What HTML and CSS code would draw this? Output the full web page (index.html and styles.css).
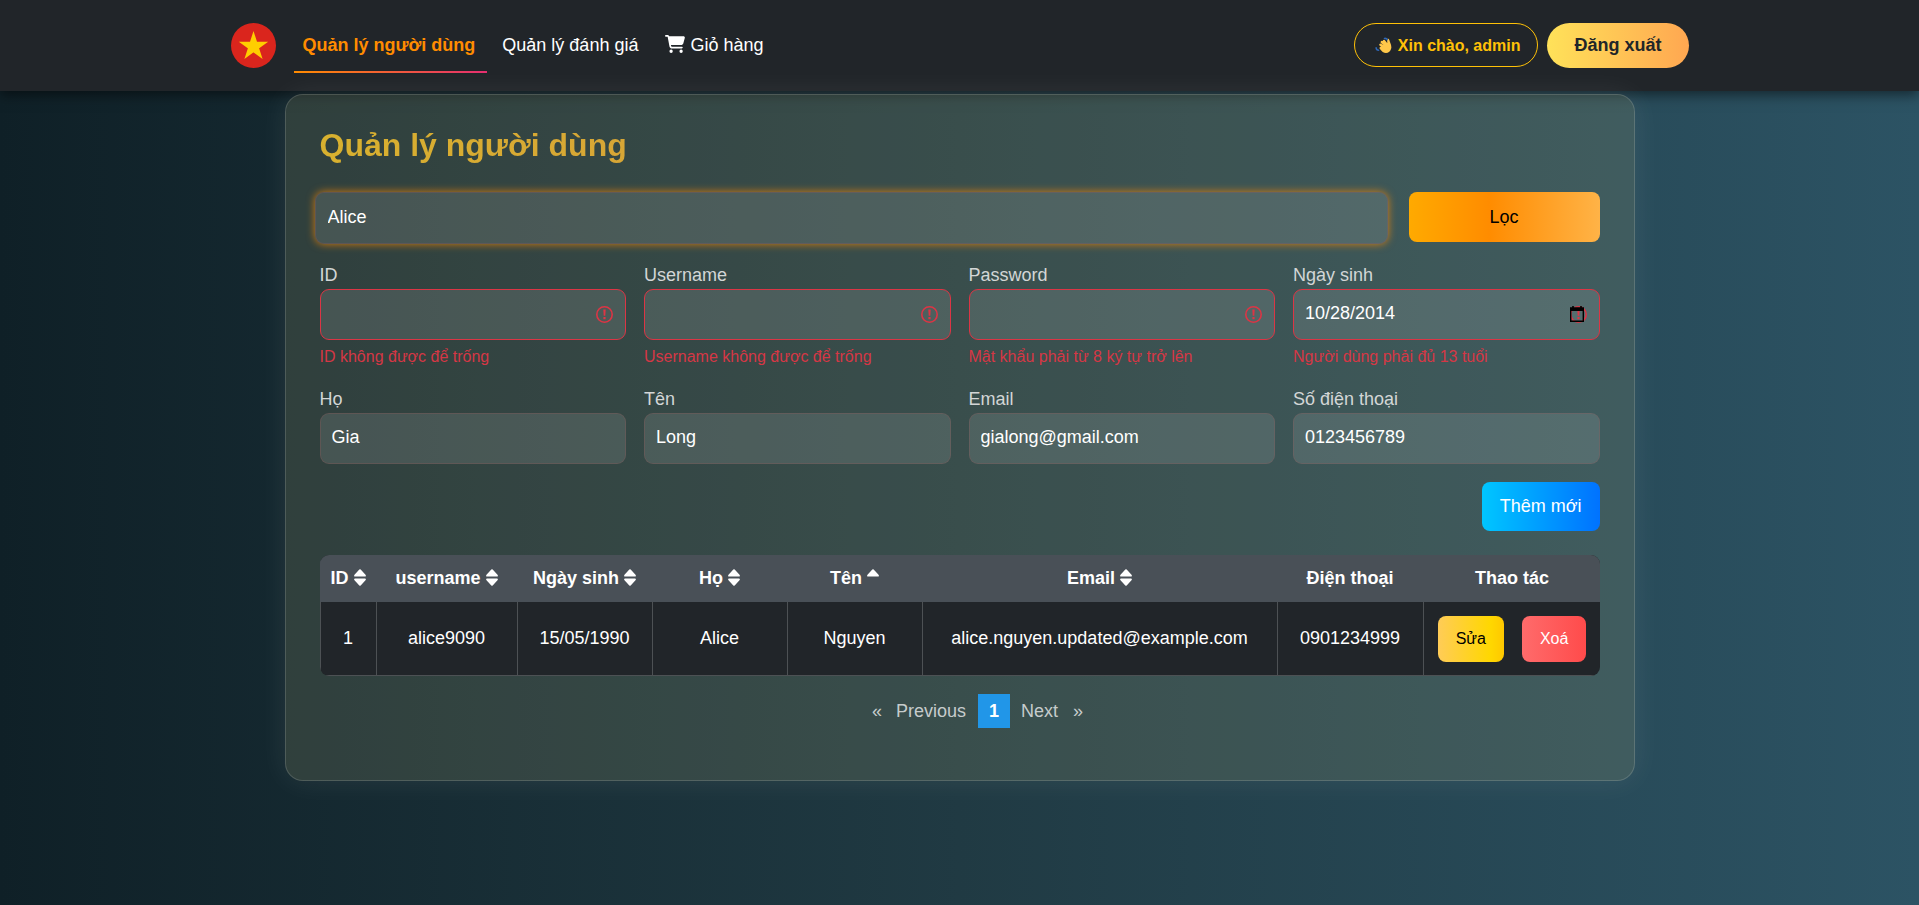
FILE: index.html
```
<!DOCTYPE html>
<html lang="vi">
<head>
<meta charset="utf-8">
<title>Quản lý người dùng</title>
<link rel="stylesheet" href="styles.css">
</head>
<body>
<svg class="sprite" aria-hidden="true">
  <symbol id="sort" viewBox="0 0 12 17"><path d="M5.300.6L.5 5.700C-.3 6.800.2 7.600 1.400 7.600H10.600C11.800 7.600 12.300 6.800 11.500 5.700L6.700.6Q6 0 5.300.6ZM5.300 16.400L.5 11.300C-.3 10.200.2 9.400 1.400 9.400H10.600C11.800 9.400 12.300 10.200 11.500 11.300L6.700 16.400Q6 17 5.300 16.400Z"/></symbol>
  <symbol id="sort-up" viewBox="0 0 12 17"><path d="M5.300.6L.5 5.700C-.3 6.800.2 7.600 1.400 7.600H10.600C11.800 7.600 12.300 6.800 11.500 5.700L6.700.6Q6 0 5.300.6Z"/></symbol>
  <symbol id="alert" viewBox="0 0 17 17"><circle cx="8.500" cy="8.500" r="7.700" fill="none" stroke="#dc3545" stroke-width="1.600"/><path fill="#dc3545" d="M7.300 3.600h2.400l-.4 6.200H7.700zM7.400 11h2.200v2.200H7.400z"/></symbol>
</svg>
<header class="navbar">
  <div class="navbar-inner">
    <a class="logo" href="#" aria-label="Trang chủ">
      <svg viewBox="0 0 45 45"><circle cx="22.500" cy="22.500" r="22.500" fill="#da251d"/><path fill="#ffcd00" d="M22.500 8L31.600 36L7.800 18.700H37.200L13.400 36z"/></svg>
    </a>
    <nav class="nav">
      <a class="nav-link active" href="#">Quản lý người dùng</a>
      <a class="nav-link" href="#">Quản lý đánh giá</a>
      <a class="nav-link" href="#"><svg class="cart" viewBox="0 0 576 512"><path fill="currentColor" d="M0 24C0 10.700 10.700 0 24 0H69.500c22 0 41.500 12.800 50.600 32h411c26.300 0 45.500 25 38.600 50.400l-41 152.300c-8.500 31.400-37 53.300-69.500 53.300H170.700l5.400 28.500c2.200 11.300 12.100 19.500 23.600 19.500H488c13.300 0 24 10.700 24 24s-10.700 24-24 24H199.700c-34.600 0-64.300-24.600-70.700-58.500L77.400 54.500c-.7-3.800-4-6.500-7.900-6.500H24C10.700 48 0 37.300 0 24zM128 464a48 48 0 1 1 96 0 48 48 0 1 1-96 0zm336-48a48 48 0 1 1 0 96 48 48 0 1 1 0-96z"/></svg> Giỏ hàng</a>
    </nav>
    <div class="account">
      <span class="greeting">
        <svg class="wave" viewBox="0 0 18 18"><g transform="rotate(-8 10 11)"><path fill="none" stroke="#ffc84a" stroke-width="2.600" stroke-linecap="round" d="M6.200 7.600L10 11M8 5L11.500 9M10.500 4.200L13 8.500M6 11L9 13"/><path fill="#ffc84a" d="M7 10L12.500 6.500C14 8 13.800 5.500 13.700 3.500C14 2 16 2.200 16.200 4C16.500 7 18 10 17 13C15.500 17.500 10.500 18.500 7.500 15.500L5.300 12.500Z"/></g><path fill="none" stroke="#2f66b5" stroke-width="1.600" stroke-linecap="round" d="M10 1.500Q12.400 1.200 13 3M1.200 11.500Q1.400 13.800 3.800 14"/></svg>
        Xin chào, admin
      </span>
      <button class="logout" type="button">Đăng xuất</button>
    </div>
  </div>
</header>
<main class="card">
  <h1 class="title">Quản lý người dùng</h1>
  <form class="search">
    <input class="control search-input" type="text" value="Alice" aria-label="Tìm kiếm">
    <button class="btn btn-filter" type="button">Lọc</button>
  </form>
  <form class="user-form">
    <div class="field">
      <label for="f-id">ID</label>
      <div class="box invalid"><input class="control" id="f-id" type="text"><svg class="alert"><use href="#alert"/></svg></div>
      <p class="error">ID không được để trống</p>
    </div>
    <div class="field">
      <label for="f-user">Username</label>
      <div class="box invalid"><input class="control" id="f-user" type="text"><svg class="alert"><use href="#alert"/></svg></div>
      <p class="error">Username không được để trống</p>
    </div>
    <div class="field">
      <label for="f-pass">Password</label>
      <div class="box invalid"><input class="control" id="f-pass" type="password"><svg class="alert"><use href="#alert"/></svg></div>
      <p class="error">Mật khẩu phải từ 8 ký tự trở lên</p>
    </div>
    <div class="field">
      <label for="f-dob">Ngày sinh</label>
      <div class="box invalid"><input class="control" id="f-dob" type="text" value="10/28/2014"><svg class="alert"><use href="#alert"/></svg><svg class="calendar" viewBox="0 0 14 16"><path fill="none" stroke="#000" stroke-width="1.400" d="M.7 2.300h12.600v13H.7z"/><path d="M0 1.600h14V5H0zM2.200 0h1.600v2H2.200zM10.200 0h1.600v2h-1.600z"/></svg></div>
      <p class="error">Người dùng phải đủ 13 tuổi</p>
    </div>
    <div class="field">
      <label for="f-last">Họ</label>
      <div class="box"><input class="control" id="f-last" type="text" value="Gia"></div>
    </div>
    <div class="field">
      <label for="f-first">Tên</label>
      <div class="box"><input class="control" id="f-first" type="text" value="Long"></div>
    </div>
    <div class="field">
      <label for="f-email">Email</label>
      <div class="box"><input class="control" id="f-email" type="text" value="gialong@gmail.com"></div>
    </div>
    <div class="field">
      <label for="f-phone">Số điện thoại</label>
      <div class="box"><input class="control" id="f-phone" type="text" value="0123456789"></div>
    </div>
    <button class="btn btn-add" type="button">Thêm mới</button>
  </form>
  <div class="table-wrap">
    <table class="users">
      <colgroup><col class="c-id"><col class="c-user"><col class="c-name"><col class="c-name"><col class="c-name"><col class="c-email"><col class="c-phone"><col class="c-act"></colgroup>
      <thead>
        <tr>
          <th>ID <svg class="sort"><use href="#sort"/></svg></th>
          <th>username <svg class="sort"><use href="#sort"/></svg></th>
          <th>Ngày sinh <svg class="sort"><use href="#sort"/></svg></th>
          <th>Họ <svg class="sort"><use href="#sort"/></svg></th>
          <th>Tên <svg class="sort"><use href="#sort-up"/></svg></th>
          <th>Email <svg class="sort"><use href="#sort"/></svg></th>
          <th>Điện thoại</th>
          <th>Thao tác</th>
        </tr>
      </thead>
      <tbody>
        <tr>
          <td>1</td>
          <td>alice9090</td>
          <td>15/05/1990</td>
          <td>Alice</td>
          <td>Nguyen</td>
          <td>alice.nguyen.updated@example.com</td>
          <td>0901234999</td>
          <td><div class="actions"><button class="btn btn-sm btn-edit" type="button">Sửa</button><button class="btn btn-sm btn-delete" type="button">Xoá</button></div></td>
        </tr>
      </tbody>
    </table>
  </div>
  <nav class="pagination" aria-label="Phân trang">
    <a class="page" href="#">«</a><a class="page" href="#">Previous</a><a class="page current" href="#">1</a><a class="page" href="#">Next</a><a class="page" href="#">»</a>
  </nav>
</main>
</body>
</html>
```
FILE: styles.css
```
* {
  box-sizing: border-box;
}

body {
  margin: 0;
  min-height: 100vh;
  font-family: "Liberation Sans", Arial, sans-serif;
  font-size: 18px;
  line-height: 27px;
  color: #fff;
  background: linear-gradient(to right, #0f2027, #203a43, #2c5364);
}

a {
  color: inherit;
  text-decoration: none;
}

button,
input {
  font: inherit;
  color: inherit;
}

.sprite {
  display: none;
}

.navbar {
  padding: 9px 24px;
  background: #212529;
  box-shadow: 0 4px 12px rgba(0, 0, 0, 0.5);
}

.navbar-inner {
  display: flex;
  align-items: center;
  max-width: 1458px;
  height: 73px;
  margin: 0 auto;
}

.logo {
  width: 45px;
  height: 45px;
  margin-right: 18px;
}

.logo svg {
  display: block;
}

.nav {
  display: flex;
  gap: 6px;
}

.nav-link {
  padding: 14px 12px 12px 9px;
  border-bottom: 2px solid transparent;
}

.nav-link.active {
  font-weight: bold;
  color: #ff8c00;
  border-image: linear-gradient(to right, #ff8c00, #e52e71) 1;
}

.cart {
  width: 20px;
  height: 18px;
  vertical-align: -2px;
}

.account {
  display: flex;
  align-items: flex-start;
  gap: 9px;
  margin-left: auto;
}

.greeting {
  display: flex;
  align-items: center;
  gap: 6px;
  height: 44px;
  padding: 0 17px 0 20px;
  border: 1px solid #ffc107;
  border-radius: 22px;
  font-size: 16px;
  font-weight: bold;
  color: #ffc107;
}

.wave {
  width: 17px;
  height: 17px;
}

.logout {
  height: 45px;
  padding: 0 27px;
  border: 0;
  border-radius: 23px;
  font-weight: bold;
  color: #212529;
  background: linear-gradient(to right, #ffe259, #ffa751);
}

.card {
  max-width: 1350px;
  margin: 3px auto 0;
  padding: 31px 34px 52px;
  border: 1px solid rgba(255, 255, 255, 0.15);
  border-radius: 18px;
  background: rgba(160, 160, 115, 0.2);
  box-shadow: 0 0 30px rgba(255, 255, 255, 0.08);
}

.title {
  margin: 0 0 27px;
  font-size: 32px;
  line-height: 39px;
  color: transparent;
  background: linear-gradient(to right, #d8b12f, #d6953f 60%, #d6953f);
  background-clip: text;
  -webkit-background-clip: text;
}

.search {
  display: grid;
  grid-template-columns: 1fr 191px;
  gap: 21px;
  align-items: start;
  margin: 0 0 18px -5px;
}

.control {
  display: block;
  width: 100%;
  height: 51px;
  padding: 0 11px 2px;
  border: 1px solid rgba(150, 90, 90, 0.3);
  border-radius: 9px;
  background: rgba(255, 255, 255, 0.11);
  outline: 0;
}

.search-input {
  height: 52px;
  padding-left: 12px;
  box-shadow: 0 0 9px rgba(255, 140, 0, 0.8);
}

.btn {
  height: 49px;
  padding: 0 18px;
  border: 0;
  border-radius: 8px;
}

.btn-filter {
  height: 50px;
  color: #000;
  background: linear-gradient(to right, #ffaa00, #ff8c00 42%, #ffb347);
}

.user-form {
  display: grid;
  grid-template-columns: repeat(4, 1fr);
  column-gap: 18px;
  row-gap: 18px;
}

.field label {
  display: block;
  color: #d3d6d6;
}

.box {
  position: relative;
}

.invalid .control {
  border-color: #dc3545;
}

.alert {
  position: absolute;
  top: 17px;
  right: 13px;
  width: 17px;
  height: 17px;
}

.calendar {
  position: absolute;
  top: 17px;
  right: 16px;
  width: 14px;
  height: 16px;
}

.error {
  margin: 5px 0 0;
  font-size: 16px;
  line-height: 23px;
  color: #d53745;
}

.btn-add {
  grid-column: 4;
  justify-self: end;
  background: linear-gradient(to right, #00c6ff, #0072ff);
}

.table-wrap {
  margin-top: 24px;
  overflow: hidden;
  border-radius: 9px;
}

.users {
  width: 100%;
  border-collapse: collapse;
  table-layout: fixed;
  text-align: center;
  background: #212529;
}

.users th {
  height: 46px;
  padding: 0;
  border: 1px solid #495057;
  background: #495057;
}

.users td {
  height: 74px;
  padding: 0;
  border: 1px solid #4d5154;
}

.c-id { width: 56px; }
.c-user { width: 141px; }
.c-name { width: 135px; }
.c-email { width: 355px; }
.c-phone { width: 146px; }
.c-act { width: 178px; }

.sort {
  width: 12px;
  height: 17px;
  vertical-align: -2px;
  fill: #fff;
}

.actions {
  display: flex;
  justify-content: center;
  gap: 18px;
}

.btn-sm {
  height: 46px;
  font-size: 16px;
}

.btn-edit {
  color: #000;
  background: linear-gradient(to right, #ffcc57, #ffd700 80%, #ffc800);
}

.btn-delete {
  background: linear-gradient(to right, #ff6b6b, #ff4b4b);
}

.pagination {
  display: flex;
  justify-content: center;
  margin-top: 18px;
  padding-left: 36px;
}

.page {
  padding: 3px 12px 3px 11px;
  line-height: 28px;
  color: #c6cccc;
}

.page:first-child,
.page:last-child {
  padding: 3px 3px;
}

.current {
  padding: 3px 11px;
  font-weight: bold;
  color: #fff;
  background: #2196e8;
}
```
